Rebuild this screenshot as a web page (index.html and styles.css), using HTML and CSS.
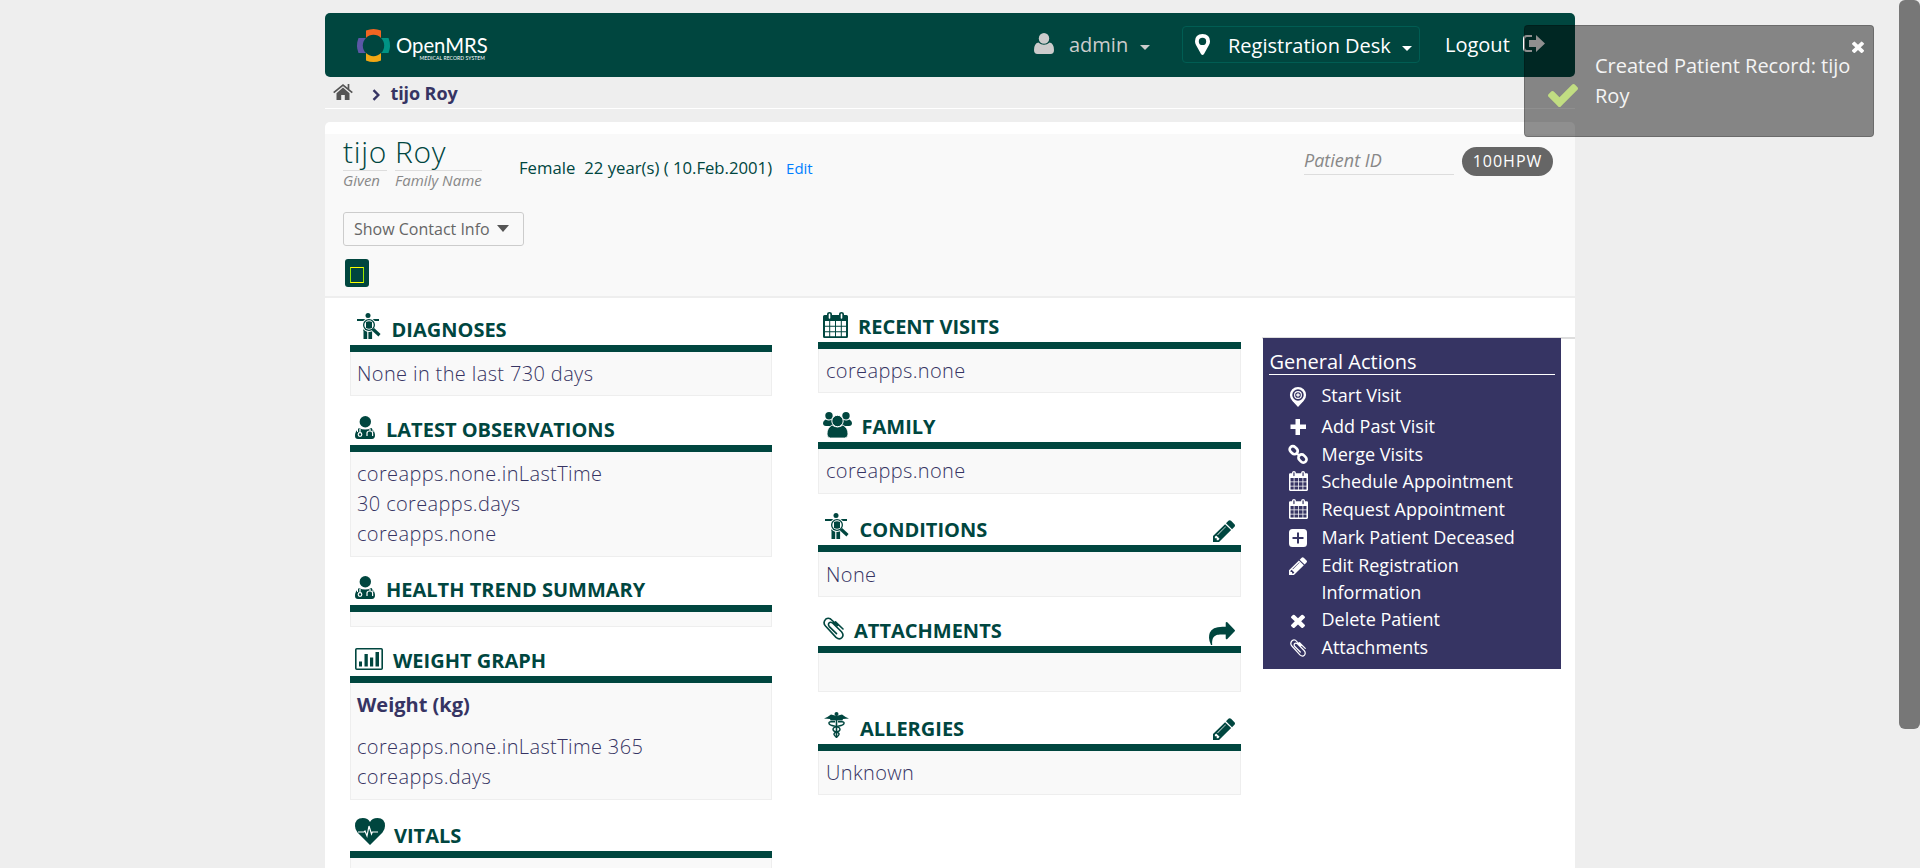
FILE: index.html
```html
<!DOCTYPE html>
<html lang="en">
<head>
<meta charset="utf-8">
<title>OpenMRS</title>
<link rel="stylesheet" href="styles.css">
</head>
<body>
<svg class="sprite" aria-hidden="true">
  <symbol id="person-search" viewBox="0 0 24 26" preserveAspectRatio="none">
    <circle cx="11" cy="2.500" r="2.500"/><path d="M0 6h22v2H0zM6.500 17h3.700v9H6.500zM11.400 17h3.700v9h-3.700z"/>
    <path d="M6.500 7h9v11h-9z"/><circle cx="12" cy="12" r="7" fill="#fff"/><circle cx="12" cy="12" r="6"/><circle cx="12" cy="12" r="4.700" fill="#fff"/><path d="M9 9q3-1.500 6 0v6q-3 1.500-6 0z"/>
    <path d="M16 16.200l6.500 6" stroke="currentColor" stroke-width="3.200"/>
  </symbol>
  <symbol id="doctor" viewBox="0 0 20 23" preserveAspectRatio="none">
    <circle cx="10.300" cy="5.700" r="5.700"/><path d="M4 12q6 3 12.500 0 3.500 3 3.500 8-.5 3-3 3H3q-3 0-3-3 0-5 4-8z"/>
    <path d="M5 12.500v4M15 13v2m-3 5v-3q0-2 2.800-2t2.800 2v3" fill="none" stroke="#fff" stroke-width="1.200"/><circle cx="5" cy="18.500" r="1.800" fill="none" stroke="#fff" stroke-width="1.200"/>
    <path d="M2.500 12v4M18 12v4" stroke="#fff" stroke-width="1"/>
  </symbol>
  <symbol id="chart" viewBox="0 0 28 22" preserveAspectRatio="none">
    <rect x=".8" y=".8" width="26.400" height="20.400" rx="1" fill="none" stroke="currentColor" stroke-width="1.600"/><path d="M4 13.500h3v5H4zM9.500 6h3.300v12.500H9.500zM15 9.500h3.200v9H15zM20.500 4h3.500v14.500h-3.500z"/>
  </symbol>
  <symbol id="heart" viewBox="0 0 30 27" preserveAspectRatio="none">
    <path d="M15 27L2.500 14.500Q0 11.500 0 8q0-8 7.800-8Q13 0 15 4q2-4 7.500-4Q30 0 30 8q0 3.500-2.500 6.500z"/><path d="M3 14h6l1-1 2 5 2-10 2.500 8 .8-2H23" fill="none" stroke="#fff" stroke-width="1.200"/>
  </symbol>
  <symbol id="calendar" viewBox="0 0 25 26" preserveAspectRatio="none">
    <path d="M1.500 3H4V2q0-2 2.500-2T9 2v1h7V2q0-2 2.500-2T21 2v1h2.500Q25 3 25 4.500v20q0 1.500-1.500 1.500h-22Q0 26 0 24.500v-20Q0 3 1.500 3z"/>
    <path class="cut" d="M2 9h4.200v4.700H2zM7.200 9h4.800v4.700H7.200zM13 9h4.800v4.700H13zM18.800 9H23v4.700h-4.200zM2 14.700h4.200v4.600H2zM7.200 14.700h4.800v4.600H7.200zM13 14.700h4.800v4.600H13zM18.800 14.700H23v4.600h-4.200zM2 20.300h4.200v3.900H2zM7.200 20.300h4.800v3.900H7.200zM13 20.300h4.800v3.900H13zM18.800 20.300H23v3.900h-4.200zM5.700 2.200q0-.7.8-.7t.8.700V6q0 .7-.8.700T5.700 6zM17.700 2.200q0-.7.8-.7t.8.700V6q0 .7-.8.700t-.8-.7z"/>
  </symbol>
  <symbol id="group" viewBox="0 0 29 26" preserveAspectRatio="none">
    <circle cx="6" cy="3.700" r="3.700"/><circle cx="23" cy="3.700" r="3.700"/><path d="M2.500 7.500q3.500 2 6.500 0L10 14H3q-3 0-3-3 0-2 2.500-3.500zM26.500 7.500q-3.500 2-6.500 0L19 14h7q3 0 3-3 0-2-2.500-3.500z"/>
    <path d="M9 13q5.500 4 11 0 5 3 5 9 0 4-3.500 4h-14Q4 26 4 22q0-6 5-9z" stroke="#fff" stroke-width=".8"/><circle cx="14.500" cy="9" r="5.700" stroke="#fff" stroke-width="1"/>
  </symbol>
  <symbol id="clip" viewBox="0 0 21 23" preserveAspectRatio="none">
    <path d="M14.500 8.500L9 3.300Q6-.2 2.700 2.200-.5 5.500 2.500 9L13 20.300q3.500 3 6 .2 2.200-2.800-.5-5.800L9.800 6.200Q7.500 4.500 6 6q-1.200 1.700.3 3.600l7.200 7M20 12L12.500 4.800" fill="none" stroke="currentColor" stroke-width="1.600" stroke-linecap="round"/>
  </symbol>
  <symbol id="caduceus" viewBox="0 0 25 26" preserveAspectRatio="none">
    <circle cx="12.500" cy="2" r="2"/><path d="M11.700 3h1.600v23h-1.600zM0 6.500Q4 5 7 2.500l4 1 1.500 1.500L14 3.500l4-1q3 2.500 7 4l-6 .5-.5 1.500H14l-1.500-1-1.500 1H6.500L6 7z"/>
    <path d="M11 9.800H7q-2.500 0-2 1.700t5 2.500q6 1 6 3.300t-3.500 2.700q-3 1-2.500 2.500t2.500 2.500M14 9.800h4q2.500 0 2 1.700t-5 2.500q-6 1-6 3.300t3.500 2.700q3 1 2.500 2.500t-2.500 2.500" fill="none" stroke="currentColor" stroke-width="1.400"/>
  </symbol>
  <symbol id="pencil" viewBox="128 128 1515 1536" preserveAspectRatio="none">
    <path d="M491 1536l91-91-235-235-91 91v107h128v128h107zm523-928q0-22-22-22-10 0-17 7l-542 542q-7 7-7 17 0 22 22 22 10 0 17-7l542-542q7-7 7-17zm-54-192l416 416-832 832h-416v-416zm683 96q0 53-37 90l-166 166-416-416 166-165q36-38 90-38 53 0 91 38l235 234q37 39 37 91z"/>
  </symbol>
  <symbol id="share" viewBox="0 64 1792 1536" preserveAspectRatio="none">
    <path d="M1792 640q0 26-19 45l-512 512q-19 19-45 19t-45-19-19-45v-256h-224q-98 0-175.500 6t-154 21.500-133 42.500-105.500 69.500-80 101-48.500 138.500-17.500 181q0 55 5 123 0 6 2.500 23.500t2.500 26.500q0 15-8.500 25t-23.500 10q-16 0-28-17-7-9-13-22t-13.500-30-10.500-24q-127-285-127-451 0-199 53-333 162-403 875-403h224v-256q0-26 19-45t45-19 45 19l512 512q19 19 19 45z"/>
  </symbol>
  <symbol id="times" viewBox="302 302 1188 1252" preserveAspectRatio="none">
    <path d="M1490 1322q0 40-28 68l-136 136q-28 28-68 28t-68-28l-294-294-294 294q-28 28-68 28t-68-28l-136-136q-28-28-28-68t28-68l294-294-294-294q-28-28-28-68t28-68l136-136q28-28 68-28t68 28l294 294 294-294q28-28 68-28t68 28l136 136q28 28 28 68t-28 68l-294 294 294 294q28 28 28 68z"/>
  </symbol>
  <symbol id="check" viewBox="121 334 1550 1188" preserveAspectRatio="none">
    <path d="M1671 566q0 40-28 68l-724 724-136 136q-28 28-68 28t-68-28l-136-136-362-362q-28-28-28-68t28-68l136-136q28-28 68-28t68 28l294 295 656-657q28-28 68-28t68 28l136 136q28 28 28 68z"/>
  </symbol>
</svg>

<div class="page">
  <header class="topbar">
    <div class="logo">
      <svg class="logo-mark" viewBox="0 0 33 33"><path fill="#f26522" d="M9 1.500q7.500-3 15 0V9H9z"/><path fill="#f2a814" d="M9 31.500q7.500 3 15 0V24H9z"/><path fill="#5b57a6" d="M1.500 9q-3 7.500 0 15H9V9z"/><path fill="#009384" d="M31.500 9q3 7.500 0 15H24V9z"/><circle cx="16.500" cy="16.500" r="10.700" fill="#00463f"/></svg>
      <div class="logo-text"><span class="logo-name">OpenMRS</span><span class="logo-sub">MEDICAL RECORD SYSTEM</span></div>
    </div>
    <div class="user">
      <svg class="user-icon" viewBox="0 0 20 21"><ellipse cx="10" cy="5.400" rx="5.200" ry="5.400"/><path d="M4.300 9.500Q10 14 15.700 9.500 20 10.500 20 17q0 4-3.500 4h-13Q0 21 0 17q0-6.500 4.300-7.500z"/></svg>
      <span>admin</span><i class="caret"></i>
    </div>
    <div class="location">
      <svg class="pin" viewBox="0 0 15 21"><path fill-rule="evenodd" d="M7.500 0Q15 .3 15 7.300q0 2-1 3.700L9 20q-1.500 2-3 0L1 11Q0 9.300 0 7.300 0 .3 7.500 0zm0 3.700a3.700 3.700 0 1 0 0 7.400 3.700 3.700 0 0 0 0-7.400z"/></svg>
      <span>Registration Desk</span><i class="caret"></i>
    </div>
    <div class="logout"><span>Logout</span><svg class="out" viewBox="0 0 22 17"><path d="M9 1H4Q1 1 1 4v9q0 3 3 3h5" fill="none" stroke="currentColor" stroke-width="2"/><path d="M6 5h7V0l9 8.500-9 8.500v-5H6z"/></svg></div>
  </header>

  <nav class="crumbs">
    <svg class="home" viewBox="0 0 20 16"><path d="M10 3.500l6.500 5.700V16h-4.700v-5H8.200v5H3.500V9.200z"/><path d="M.7 8.700L10 1l9.300 7.700M15.500 0v5" fill="none" stroke="currentColor" stroke-width="1.700"/></svg>
    <svg class="chev" viewBox="0 0 8 12"><path d="M1.500 1.200L6.300 6l-4.800 4.800" fill="none" stroke="currentColor" stroke-width="2.400"/></svg>
    <span>tijo Roy</span>
  </nav>

  <main class="panel">
    <section class="patient">
      <div class="patient-row">
        <div class="name given"><span class="value">tijo</span><em>Given</em></div>
        <div class="name family"><span class="value">Roy</span><em>Family Name</em></div>
        <div class="demo"><span>Female</span><span>22 year(s) ( 10.Feb.2001)</span><a>Edit</a></div>
        <div class="ids"><em>Patient ID</em><span class="badge">100HPW</span></div>
      </div>
      <div class="contact">Show Contact Info<i class="caret-lg"></i></div>
      <div class="flag"><i></i></div>
    </section>

    <div class="dash">
      <div class="col col-left">
        <section class="w w-diag"><h3><svg class="i-person"><use href="#person-search"/></svg>DIAGNOSES</h3><div class="box">None in the last 730 days</div></section>
        <section class="w w-obs"><h3><svg class="i-doc"><use href="#doctor"/></svg>LATEST OBSERVATIONS</h3><div class="box">coreapps.none.inLastTime<br>30 coreapps.days<br>coreapps.none</div></section>
        <section class="w w-trend"><h3><svg class="i-doc"><use href="#doctor"/></svg>HEALTH TREND SUMMARY</h3><div class="box"></div></section>
        <section class="w w-weight"><h3><svg class="i-chart"><use href="#chart"/></svg>WEIGHT GRAPH</h3><div class="box"><strong>Weight (kg)</strong>coreapps.none.inLastTime 365<br>coreapps.days</div></section>
        <section class="w w-vitals"><h3><svg class="i-heart"><use href="#heart"/></svg>VITALS</h3><div class="box"></div></section>
      </div>
      <div class="col col-mid">
        <section class="w w-visits"><h3><svg class="i-cal"><use href="#calendar"/></svg>RECENT VISITS</h3><div class="box">coreapps.none</div></section>
        <section class="w w-family"><h3><svg class="i-group"><use href="#group"/></svg>FAMILY</h3><div class="box">coreapps.none</div></section>
        <section class="w w-cond"><h3><svg class="i-person"><use href="#person-search"/></svg>CONDITIONS<svg class="edit"><use href="#pencil"/></svg></h3><div class="box">None</div></section>
        <section class="w w-attach"><h3><svg class="i-clip"><use href="#clip"/></svg>ATTACHMENTS<svg class="edit share"><use href="#share"/></svg></h3><div class="box"></div></section>
        <section class="w w-allergy"><h3><svg class="i-cad"><use href="#caduceus"/></svg>ALLERGIES<svg class="edit"><use href="#pencil"/></svg></h3><div class="box">Unknown</div></section>
      </div>
      <aside class="side">
        <div class="actions">
          <h4>General Actions</h4>
          <ul>
            <li class="start"><svg viewBox="0 0 18 20"><path d="M3 13.500L9 20l6-6.500-6 1.500z"/><circle cx="9" cy="8" r="6.900" fill="none" stroke="currentColor" stroke-width="2.400"/><circle cx="9" cy="8" r="3.400" fill="none" stroke="currentColor" stroke-width="1.100"/><path d="M7.200 8h3.600M9 6.200v3.600" stroke="currentColor" stroke-width="1.300"/></svg>Start Visit</li>
            <li class="past"><svg viewBox="0 0 18 20"><path d="M6.500 2h4.500v5.500h6V12h-6v6H6.500v-6h-5V7.500h5z"/></svg>Add Past Visit</li>
            <li class="short"><svg viewBox="0 0 18 20"><g fill="none" stroke="currentColor" stroke-width="2.700"><rect x="-4.400" y="-3.200" width="8.800" height="6.400" rx="3.200" transform="translate(4.700 5.200) rotate(45)"/><rect x="-4.400" y="-3.200" width="8.800" height="6.400" rx="3.200" transform="translate(13.500 13.500) rotate(45)"/></g><path d="M7 7.500l4 4" stroke="currentColor" stroke-width="2.200"/></svg>Merge Visits</li>
            <li><svg class="cal"><use href="#calendar"/></svg>Schedule Appointment</li>
            <li><svg class="cal"><use href="#calendar"/></svg>Request Appointment</li>
            <li><svg viewBox="0 0 18 20"><path fill-rule="evenodd" d="M3.500 1h11Q18 1 18 4.500v11q0 3.500-3.500 3.500h-11Q0 19 0 15.500v-11Q0 1 3.500 1zM8 4.500V9H3.500v2H8v4.500h2V11h4.500V9H10V4.500z"/></svg>Mark Patient Deceased</li>
            <li class="two"><svg class="pen"><use href="#pencil"/></svg>Edit Registration<br>Information</li>
            <li><svg class="x"><use href="#times"/></svg>Delete Patient</li>
            <li><svg class="clip"><use href="#clip"/></svg>Attachments</li>
          </ul>
        </div>
      </aside>
    </div>
  </main>
</div>

<div class="toast">
  <svg class="tick"><use href="#check"/></svg>
  <p>Created Patient Record: tijo<br>Roy</p>
  <svg class="close"><use href="#times"/></svg>
</div>
<div class="scroll-thumb"></div>
</body>
</html>
```
FILE: styles.css
```css
* { box-sizing: border-box; }
html { overflow: hidden; }
body { margin: 0; height: 868px; overflow: hidden; background: #eee; font-family: "Open Sans", "Noto Sans", sans-serif; font-size: 20px; line-height: 30px; color: #363463; }
svg { fill: currentColor; flex: none; display: block; overflow: visible; }
.sprite { position: absolute; width: 0; height: 0; }
.page { width: 1250px; margin-left: 325px; padding-top: 13px; }

.topbar { height: 64px; border-radius: 5px; background: #00463f; color: #fff; display: flex; align-items: flex-start; }
.logo { display: flex; margin: 16px 0 0 32px; width: 677px; }
.logo-mark { width: 33px; height: 33px; }
.logo-text { display: flex; flex-direction: column; margin-left: 6px; width: 91px; font-family: Lato, sans-serif; }
.logo-name { font-size: 20.300px; line-height: 26px; height: 26px; margin-top: 3px; }
.logo-sub { font-size: 5px; line-height: 6px; margin-top: -3px; align-self: flex-end; letter-spacing: .1px; margin-right: 2px; }
.user { display: flex; width: 148px; padding-top: 17px; color: #ccc; }
.user-icon { width: 20px; height: 21px; margin: 3px 15px 0 0; }
.caret { border: 5px solid transparent; border-top-color: currentColor; border-bottom: 0; height: 0; }
.user .caret { margin: 15px 0 0 12px; }
.location { display: flex; width: 238px; height: 37px; margin-top: 13px; border: 1px solid #005d53; border-radius: 4px; padding: 4px 0 0 12px; }
.pin { width: 15px; height: 21px; margin: 3px 18px 0 0; }
.location .caret { margin: 15px 0 0 11px; }
.logout { display: flex; padding: 17px 0 0 25px; }
.out { width: 22px; height: 17px; margin: 5px 0 0 13px; color: #fff; }

.crumbs { display: flex; height: 32px; border-bottom: 1px solid #fff; font-size: 18px; font-weight: 700; line-height: 32px; padding-left: 8px; }
.crumbs span { letter-spacing: -.1px; }
.home { width: 20px; height: 16px; margin: 7px 18.500px 0 0; color: #555; }
.chev { width: 8px; height: 12px; margin: 12px 11px 0 0; }

.panel { margin-top: 13px; padding-top: 12px; background: #fff; border-radius: 5px 5px 0 0; height: 746px; overflow: hidden; }
.patient { height: 164px; background: #f9f9f9; border-bottom: 2px solid #eee; padding-left: 18px; color: #00463f; }
.patient-row { display: flex; height: 78px; }
.name { display: flex; flex-direction: column; }
.given { width: 44px; margin-right: 8px; }
.family { width: 87px; }
.value { font-size: 30px; font-weight: 300; line-height: 36px; height: 37px; letter-spacing: .7px; border-bottom: 1px solid #ddd; white-space: nowrap; }
.name em, .ids em { color: #888; }
.name em { font-size: 15px; line-height: 18px; white-space: nowrap; }
.demo { display: flex; margin: 19px 0 0 37px; font-size: 16.700px; }
.demo span { margin-right: 9px; }
.demo a { margin-left: 5px; font-size: 15px; color: #007fff; }
.ids { display: flex; margin-left: auto; padding-right: 22px; }
.ids em { width: 150px; height: 41px; border-bottom: 1px solid #ddd; padding-top: 11px; font-size: 18px; margin-right: 8px; }
.badge { width: 91px; height: 29px; margin-top: 13px; border-radius: 15px; background: #666; color: #fff; font-size: 16px; font-weight: 500; line-height: 28px; letter-spacing: 1px; text-align: center; }
.contact { display: flex; width: 181px; height: 34px; border: 1px solid #ccc; border-radius: 3px; padding-left: 10px; font-size: 16px; line-height: 32px; color: #666; white-space: nowrap; }
.caret-lg { border: 6px solid transparent; border-top: 7px solid #555; border-bottom: 0; height: 0; margin: 12px 0 0 7px; }
.flag { width: 24px; height: 28px; margin: 13px 0 0 2px; border-radius: 3px; background: #00463f; padding: 8px 0 0 5px; }
.flag i { display: block; width: 14px; height: 16px; border: 1px solid #ff0; border-left-color: #9be800; border-right-color: #9be800; }

.dash { display: flex; }
.col-left { width: 422px; margin-left: 25px; }
.col-mid { width: 423px; margin-left: 46px; }
.w h3 { display: flex; align-items: flex-end; margin: 0; border-bottom: 7px solid #00463f; color: #00463f; font-size: 20px; font-weight: 700; line-height: 26px; padding-bottom: 2px; white-space: nowrap; }
.w h3 > svg { margin-bottom: 4px; }
.box { border: 1px solid #eee; border-top: 0; background: #f9f9f9; padding: 7px 6px 0; font-weight: 300; letter-spacing: .37px; }
.col-mid .box { padding-left: 7px; }
.box strong { display: block; font-weight: 700; letter-spacing: 0; margin-bottom: 12px; }
.edit { color: #00463f; }
.w h3 > .edit { width: 22px; height: 22px; margin: 0 6px 1px auto; }
.w-allergy h3 > .edit { margin-bottom: 2px; }
.w h3 > .share { width: 26px; height: 23px; margin-bottom: -1px; }
.w h3 > .i-person { width: 24px; height: 26px; margin-left: 7px; margin-right: 10.500px; }
.w h3 > .i-doc { width: 20px; height: 23px; margin-left: 5px; margin-right: 11px; }
.w h3 > .i-chart { width: 28px; height: 22px; margin-left: 5px; margin-right: 10px; }
.w h3 > .i-heart { width: 30px; height: 27px; margin-left: 5px; margin-right: 9px; }
.w h3 > .i-cal { width: 25px; height: 26px; margin: 0 10px 3px 5px; }
.w h3 > .i-group { width: 29px; height: 26px; margin: 0 9.500px 3px 5px; }
.w h3 > .i-clip { width: 21px; height: 23px; margin-left: 5px; margin-right: 10px; }
.w h3 > .i-cad { width: 25px; height: 26px; margin-left: 6px; margin-right: 11px; }
.cut { fill: var(--cut, #fff); }
.w-diag h3 { height: 54px; } .w-diag .box { height: 44px; }
.w-obs h3 { height: 56px; } .w-obs .box { height: 105px; }
.w-trend h3 { height: 55px; } .w-trend .box { height: 15px; }
.w-weight h3 { height: 56px; } .w-weight .box { height: 117px; }
.w-vitals h3 { height: 58px; } .w-vitals .box { height: 10px; border-bottom: 0; }
.col-mid .w-visits h3, .col-mid .w-family h3 { line-height: 28px; padding-bottom: 1px; }
.w-visits h3 { height: 51px; } .w-visits .box { height: 44px; }
.w-family h3 { height: 56px; } .w-family .box { height: 45px; }
.w-cond h3 { height: 58px; } .w-cond .box { height: 45px; padding-top: 8px; }
.w-attach h3 { height: 56px; } .w-attach .box { height: 39px; }
.w-allergy h3 { height: 59px; } .w-allergy .box { height: 44px; }

.side { width: 313px; margin: 39px 0 0 21px; border-top: 2px solid #ddd; height: 340px; }
.actions { --cut: #363463; width: 298px; height: 331px; margin: -1px 0 0 1px; background: #363463; color: #fff; padding: 14px 6px 0; }
.actions h4 { margin: 0; font-size: 20px; font-weight: 400; line-height: 20px; height: 23px; border-bottom: 1px solid #fff; padding: 0 .5px; }
.actions ul { list-style: none; margin: 7px 0 0; padding: 0 0 0 20px; font-size: 18px; line-height: 27px; }
.actions li { display: grid; grid-template-columns: 32.500px 1fr; height: 28px; white-space: nowrap; }
.actions li > svg { width: 18px; height: 20px; margin-top: 4px; grid-row: 1 / span 2; }
.actions .start { height: 31px; }
.actions .start > svg { margin-top: 5px; }
.actions .short { height: 27px; }
.actions .two { height: 54px; }
.actions li > .cal { width: 19px; height: 20px; margin-top: 3px; }
.actions li > .pen { width: 18px; height: 18px; margin-top: 5px; }
.actions li > .x { width: 14px; height: 14px; margin: 8px 0 0 2px; }
.actions li > .clip { width: 16px; height: 18px; margin: 5px 0 0 1px; }

.toast { position: absolute; left: 1524px; top: 25px; width: 350px; height: 112px; border: 1px solid rgba(0,0,0,.2); border-radius: 4px; background: rgba(0,0,0,.44); color: #f4f4f4; display: flex; align-items: flex-start; }
.toast p { margin: 25px 0 0 17px; white-space: nowrap; }
.tick { width: 30px; height: 23px; margin: 58px 0 0 23px; color: #c1dd82; }
.close { width: 12px; height: 12px; margin: 15px 0 0 2px; color: #fff; }
.scroll-thumb { position: absolute; right: 0; top: 0; width: 21px; height: 729px; border-radius: 6px; background: #777; }
```
